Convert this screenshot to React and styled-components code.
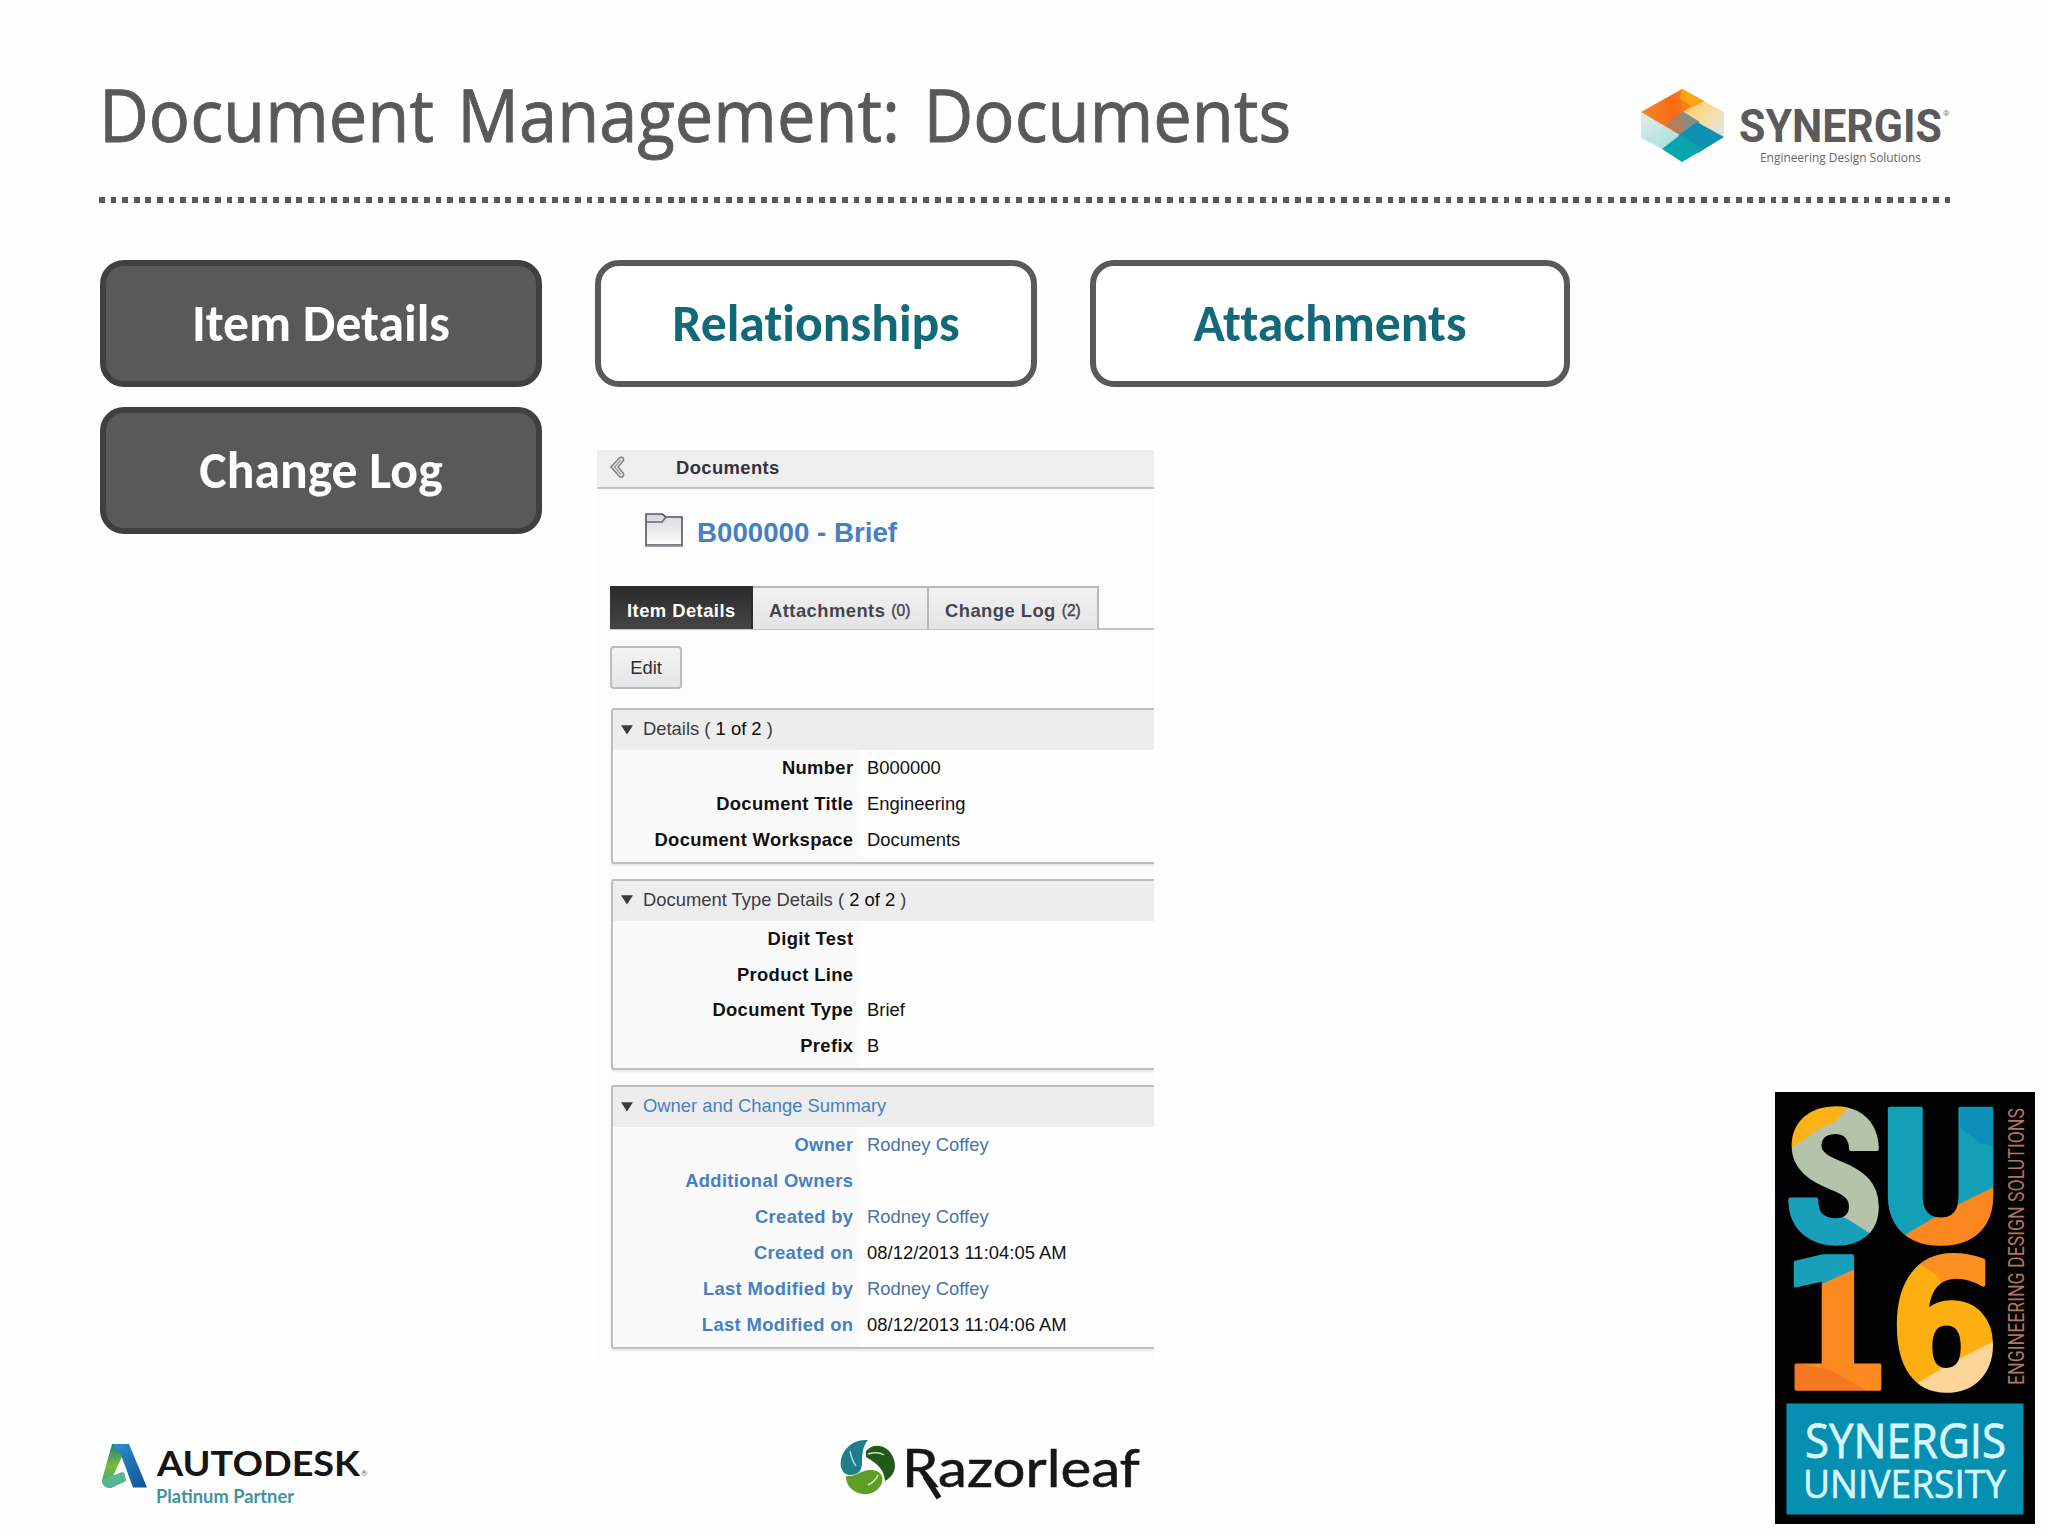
import React from 'react';
import styled, { createGlobalStyle, css } from 'styled-components';

const colors = {
  gray: '#595959',
  grayDark: '#404040',
  teal: '#126977',
  link: '#4580c2',
  value: '#4a73a8',
  line: '#bdbdbf',
  bar: '#eeedee',
};

const fonts = {
  title: "'Open Sans', 'Noto Sans', sans-serif",
  nav: "Carlito, Lato, sans-serif",
  panel: "'Liberation Sans', Arial, sans-serif",
};

const GlobalStyle = createGlobalStyle`
  * {
    box-sizing: border-box;
  }

  body {
    margin: 0;
    background: #fefefe;
  }

  svg {
    overflow: visible;
  }
`;

const Slide = styled.div`
  display: flex;
  flex-direction: column;
  width: 2048px;
  height: 1536px;
  overflow: hidden;
  background: #fefefe;
`;

const Header = styled.header`
  display: flex;
  flex-direction: column;
  padding: 0 98px;
`;

const TitleRow = styled.div`
  display: flex;
  justify-content: space-between;
  align-items: flex-start;
  height: 197px;
`;

const Title = styled.h1`
  margin: 64px 0 0 1px;
  font-family: ${fonts.title};
  font-size: 74px;
  font-weight: 400;
  line-height: 100px;
  word-spacing: 6px;
  color: ${colors.gray};
  -webkit-text-stroke: 0.9px ${colors.gray};
  white-space: nowrap;
  transform: scaleX(0.928);
  transform-origin: left center;
`;

const SynergisMark = styled.svg`
  width: 312px;
  height: 90px;
  margin-top: 84px;
`;

const DottedRule = styled.div`
  height: 6px;
  margin-left: 0.5px;
  width: 1851.6px;
  background: repeating-linear-gradient(
    90deg,
    ${colors.gray} 0,
    ${colors.gray} 5.8px,
    transparent 5.8px,
    transparent 11.609px
  );
`;

const Body = styled.div`
  display: flex;
  flex: 1;
  justify-content: space-between;
  padding: 57px 13px 12px 100px;
`;

const Main = styled.main`
  display: flex;
  flex-direction: column;
  justify-content: space-between;
`;

const Board = styled.div`
  display: grid;
  grid-template-columns: 442px 442px 480px;
  column-gap: 53px;
  row-gap: 20px;
  align-items: start;
`;

const NavButton = styled.button`
  display: flex;
  align-items: center;
  justify-content: center;
  height: 127px;
  padding: 1px 0 0;
  border: 6px solid ${colors.gray};
  border-radius: 24px;
  background: #fff;
  color: ${colors.teal};
  font-family: ${fonts.nav};
  font-size: 51.7px;
  font-weight: 700;
  font-variant-ligatures: none;
  line-height: 1;

  ${({ $filled }) =>
    $filled &&
    css`
      background: ${colors.gray};
      border-color: ${colors.grayDark};
      color: #fff;
    `}
`;

const Panel = styled.section`
  grid-column: 2 / 4;
  width: 557px;
  height: 911px;
  margin: 43px 0 0 2px;
  overflow: hidden;
  background: #fcfcfd;
  font-family: ${fonts.panel};
  font-size: 18.4px;
  color: #111;
`;

const PanelBar = styled.div`
  display: flex;
  align-items: center;
  height: 39px;
  padding: 0 0 2px 12px;
  gap: 50px;
  background: #efeff0;
  border-bottom: 2px solid #c4c4c6;
  color: #33333b;
  font-weight: 700;
  letter-spacing: 0.4px;
`;

const BackIcon = styled.svg`
  width: 17px;
  height: 24px;
  margin-top: -2px;
`;

const ItemHeading = styled.div`
  display: flex;
  height: 97px;
  padding: 23px 0 0 47px;
  gap: 13px;
`;

const FolderIcon = styled.svg`
  width: 40px;
  height: 35px;
`;

const ItemName = styled.h2`
  margin: 5px 0 0;
  font-size: 27.7px;
  line-height: 32px;
  color: ${colors.link};
`;

const TabStrip = styled.div`
  display: flex;
  height: 44px;
  margin-left: 13px;
  border-bottom: 2px solid #c4c4c8;
`;

const Tab = styled.div`
  display: flex;
  align-items: center;
  gap: 6px;
  width: ${({ $width }) => $width}px;
  height: 43px;
  padding: 5px 0 0 16px;
  border: solid #b9b9bb;
  border-width: 2px 2px 0 0;
  background: linear-gradient(#f1f1f2, #e4e4e6);
  color: #45454d;
  font-weight: 700;
  letter-spacing: 0.45px;
  white-space: nowrap;

  ${({ $active }) =>
    $active &&
    css`
      padding-left: 17px;
      border-color: #2b2b2b;
      background: linear-gradient(#2c2c2c, #454545);
      color: #fff;
    `}
`;

const TabCount = styled.span`
  font-size: 15.6px;
  font-weight: 400;
  letter-spacing: 0;
  -webkit-text-stroke: 0.4px #45454d;
`;

const EditButton = styled.button`
  display: block;
  width: 72px;
  height: 43px;
  margin: 16px 0 19px 13px;
  padding: 0;
  border: 2px solid #bcbcbe;
  border-radius: 4px;
  background: linear-gradient(#f3f3f4, #e6e6e8);
  font: inherit;
  color: #2c2c33;
`;

const Section = styled.div`
  margin: 0 0 15px 14px;
  padding-bottom: 4.2px;
  border: solid ${colors.line};
  border-width: 2px 0 2px 2px;
  border-radius: 3px 0 0 3px;
  box-shadow: 0 2px 2px rgba(0, 0, 0, 0.08);
  background: linear-gradient(90deg, #fbfafb 247px, #fefefe 247px);
`;

const SectionHeader = styled.div`
  display: flex;
  align-items: center;
  height: 40px;
  padding: 0 0 2px 8px;
  gap: 10px;
  background: ${colors.bar};
  color: ${({ $blue }) => ($blue ? colors.link : '#3c3c42')};
  white-space: pre;

  b {
    font-weight: 400;
    color: #0b0b0b;
  }
`;

const Triangle = styled.svg`
  width: 12px;
  height: 11px;
`;

const Field = styled.div`
  display: grid;
  grid-template-columns: 247px 1fr;
  height: 35.85px;
  line-height: 36px;
`;

const Label = styled.span`
  padding-right: 6.6px;
  text-align: right;
  font-weight: 700;
  letter-spacing: 0.34px;
  color: ${({ $blue }) => ($blue ? colors.link : '#111')};
`;

const Value = styled.span`
  padding-left: 7px;
  letter-spacing: 0.03px;
  color: ${({ $blue }) => ($blue ? colors.value : '#111')};
`;

const Footer = styled.footer`
  display: flex;
  gap: 458px;
  height: 85px;
`;

const AutodeskMark = styled.svg`
  width: 280px;
  height: 80px;
`;

const RazorleafMark = styled.svg`
  width: 320px;
  height: 80px;
`;

const BadgeMark = styled.svg`
  align-self: flex-end;
  width: 260px;
  height: 432px;
`;

const sections = [
  {
    title: (
      <span>
        Details ( <b>1 of 2</b> )
      </span>
    ),
    rows: [
      ['Number', 'B000000'],
      ['Document Title', 'Engineering'],
      ['Document Workspace', 'Documents'],
    ],
  },
  {
    title: (
      <span>
        Document Type Details ( <b>2 of 2</b> )
      </span>
    ),
    rows: [
      ['Digit Test', ''],
      ['Product Line', ''],
      ['Document Type', 'Brief'],
      ['Prefix', 'B'],
    ],
  },
  {
    title: <span>Owner and Change Summary</span>,
    blue: true,
    rows: [
      ['Owner', 'Rodney Coffey'],
      ['Additional Owners', ''],
      ['Created by', 'Rodney Coffey'],
      ['Created on', '08/12/2013 11:04:05 AM'],
      ['Last Modified by', 'Rodney Coffey'],
      ['Last Modified on', '08/12/2013 11:04:06 AM'],
    ],
  },
];

function SynergisLogo() {
  return (
    <SynergisMark viewBox="0 0 312 90">
      <defs>
        <linearGradient id="synOrange" x1="0" y1="0.5" x2="1" y2="0.3">
          <stop offset="0" stopColor="#f9842a" />
          <stop offset="0.5" stopColor="#f66a17" />
          <stop offset="1" stopColor="#fb9d14" />
        </linearGradient>
        <linearGradient id="synCream" x1="0" y1="0" x2="1" y2="0.6">
          <stop offset="0" stopColor="#fdc766" />
          <stop offset="0.6" stopColor="#fbdc9c" />
          <stop offset="1" stopColor="#e3e3d4" />
        </linearGradient>
        <linearGradient id="synPale" x1="0" y1="0" x2="0.7" y2="1">
          <stop offset="0" stopColor="#e6ebe6" />
          <stop offset="1" stopColor="#a5e2df" />
        </linearGradient>
      </defs>
      <polygon points="3,28 44,49 26,66 3,54" fill="url(#synPale)" />
      <polygon points="44,27 64,16 86,28 86,53 58,38" fill="url(#synCream)" />
      <polygon points="44,5 3,28 42,51 44,28 66,17" fill="url(#synOrange)" />
      <polygon points="44,5 66,17 54,23 42,14" fill="#fca512" />
      <polygon points="28,40 44,27 60,39 42,51" fill="#b07f63" />
      <polygon points="44,27 62,38 46,50" fill="#7f8f84" />
      <polygon points="40,52 59,38 86,53 60,69" fill="#0e90b0" />
      <polygon points="24,65 42,51 66,65 44,78" fill="#08a5ae" />
      <text
        x="101"
        y="58"
        fontFamily="Roboto, sans-serif"
        fontWeight="700"
        fontSize="45.5"
        fill="#5c5a5b"
        textLength="203"
        lengthAdjust="spacingAndGlyphs"
      >
        SYNERGIS
      </text>
      <text x="305" y="32" fontFamily="Roboto, sans-serif" fontSize="8" fill="#777">
        ®
      </text>
      <text
        x="122"
        y="78"
        fontFamily="'Open Sans', sans-serif"
        fontSize="13"
        fill="#666"
        textLength="161"
        lengthAdjust="spacingAndGlyphs"
      >
        Engineering Design Solutions
      </text>
    </SynergisMark>
  );
}

function AutodeskLogo() {
  return (
    <AutodeskMark viewBox="0 0 280 80">
      <defs>
        <linearGradient id="adskLeft" x1="0" y1="0" x2="0" y2="1">
          <stop offset="0" stopColor="#1a7f86" />
          <stop offset="0.5" stopColor="#7cbb3a" />
          <stop offset="1" stopColor="#2f9d7c" />
        </linearGradient>
        <linearGradient id="adskRight" x1="0" y1="0" x2="1" y2="1">
          <stop offset="0" stopColor="#2a93c8" />
          <stop offset="1" stopColor="#164f9c" />
        </linearGradient>
      </defs>
      <path d="M12 5 L28 5 L13 37 L22 33 L26 42 L11 49 Q2 49 2 41 Z" fill="url(#adskLeft)" />
      <path d="M2 40 L24 33 L26 41 L11 49 Q2 49 2 40 Z" fill="#56b893" />
      <path d="M13 5 L29 5 L47 48.500 L33 48.500 L21 16 Z" fill="url(#adskRight)" />
      <text
        x="57"
        y="37"
        fontFamily="Lato, sans-serif"
        fontWeight="700"
        fontSize="34.5"
        fill="#151515"
        textLength="203"
        lengthAdjust="spacingAndGlyphs"
      >
        AUTODESK
      </text>
      <text x="261" y="37" fontFamily="Lato, sans-serif" fontSize="8" fill="#666">
        ®
      </text>
      <text
        x="56"
        y="64"
        fontFamily="Lato, sans-serif"
        fontWeight="700"
        fontSize="18"
        fill="#43939a"
        textLength="138"
        lengthAdjust="spacingAndGlyphs"
      >
        Platinum Partner
      </text>
    </AutodeskMark>
  );
}

function RazorleafLogo() {
  return (
    <RazorleafMark viewBox="0 0 320 80">
      <path d="M30 1 C12 0 1 14 3 28 C5 34 8 36 12 36 C20 36 24 32 24 24 C24 14 25 7 30 1 Z" fill="#1f7e8c" />
      <path d="M28 12 C36 3 50 6 55 18 C60 29 55 38 47 42 C46 32 42 26 28 18 Z" fill="#23581d" />
      <path d="M8 37 C18 38 24 30 34 31 C42 32 46 36 44 44 C40 54 28 58 18 53 C12 50 8 45 8 37 Z" fill="#5d9e26" />
      <path d="M12 12 Q14 22 18 27" fill="none" stroke="#a9dce0" strokeWidth="1.4" />
      <path d="M30 15 Q40 12 46 16" fill="none" stroke="#cfe5b5" strokeWidth="1.4" />
      <path d="M30 46 Q38 42 40 36" fill="none" stroke="#d7efb0" strokeWidth="1.4" />
      <text
        x="64"
        y="48"
        fontFamily="Lato, sans-serif"
        fontSize="52"
        fill="#161616"
        stroke="#161616"
        strokeWidth="0.6"
        textLength="238"
        lengthAdjust="spacingAndGlyphs"
      >
        Razorleaf
      </text>
      <line x1="87" y1="37" x2="101" y2="59" stroke="#161616" strokeWidth="5.500" />
    </RazorleafMark>
  );
}

// ink: [left, right, ascent, descent] of the glyph at 100px, outline included
function PaintedGlyph({ id, char, font, weight, ink, box, base, patches }) {
  const [left, right, ascent, descent] = ink;
  const [x, y, width, height] = box;
  const sx = width / (right - left);
  const sy = height / (ascent + descent);
  const tx = x - left * sx;
  const ty = y + ascent * sy;

  return (
    <>
      <pattern
        id={id}
        patternUnits="userSpaceOnUse"
        width="260"
        height="432"
        patternTransform={`scale(${1 / sx} ${1 / sy}) translate(${-tx} ${-ty})`}
      >
        <rect width="260" height="432" fill={base} />
        {patches.map(([fill, points]) => (
          <polygon key={points} points={points} fill={fill} />
        ))}
      </pattern>
      <text
        transform={`translate(${tx} ${ty}) scale(${sx} ${sy})`}
        fontFamily={font}
        fontWeight={weight}
        fontSize="100"
        fill={`url(#${id})`}
        stroke={`url(#${id})`}
        strokeWidth="2"
        strokeLinejoin="round"
      >
        {char}
      </text>
    </>
  );
}

const glyphs = [
  {
    id: 'glyphS',
    char: 'S',
    font: 'Roboto, sans-serif',
    weight: 900,
    ink: [1.5, 61, 73, 2],
    box: [12.3, 14.7, 92.7, 139],
    base: '#b5c3ab',
    patches: [
      ['#fdb316', '0,0 76,0 72,16 60,30 45,36 15,57 0,62'],
      ['#189fb9', '0,100 52,100 62,122 74,128 96,142 96,160 0,160'],
    ],
  },
  {
    id: 'glyphU',
    char: 'U',
    font: 'Roboto, sans-serif',
    weight: 900,
    ink: [3.5, 63, 72.500, 2],
    box: [111.7, 14.7, 108.3, 139],
    base: '#139fb8',
    patches: [
      ['#0b8fb9', '185,0 225,0 225,55 205,51 185,36'],
      ['#fb8720', '125,146 155,128 188,110 225,92 225,160 125,160'],
    ],
  },
  {
    id: 'glyph1',
    char: '1',
    font: "'DejaVu Sans', sans-serif",
    weight: 700,
    ink: [10.500, 64.500, 74, 1],
    box: [19.3, 162.3, 88.4, 136.7],
    base: '#fb8a20',
    patches: [
      ['#189fb9', '0,216 47,192 82,176 82,155 0,155'],
      ['#f4781f', '0,266 55,278 98,302 0,302'],
    ],
  },
  {
    id: 'glyph6',
    char: '6',
    font: "'DejaVu Sans', sans-serif",
    weight: 700,
    ink: [4, 66, 75.500, 2],
    box: [120, 160.7, 99.3, 139],
    base: '#fdaf12',
    patches: [
      ['#fb8f20', '136,155 142,170 160,182 168,192 225,192 225,155'],
      ['#fdd598', '135,296 167,276 192,263 225,246 225,305 135,305'],
    ],
  },
];

function UniversityBadge() {
  return (
    <BadgeMark viewBox="0 0 260 432">
      <rect width="260" height="432" fill="#020202" />
      {glyphs.map((glyph) => (
        <PaintedGlyph key={glyph.id} {...glyph} />
      ))}
      <text
        transform="translate(249 293) rotate(-90)"
        fontFamily="Roboto, sans-serif"
        fontSize="21.5"
        fill="#b0765c"
        textLength="277"
        lengthAdjust="spacingAndGlyphs"
      >
        ENGINEERING DESIGN SOLUTIONS
      </text>
      <rect x="11.500" y="311.500" width="237" height="111" fill="#0590b2" />
      <text
        x="30"
        y="366"
        fontFamily="'Open Sans', sans-serif"
        fontSize="47.500"
        fill="#d8f5fb"
        stroke="#d8f5fb"
        strokeWidth="0.8"
        textLength="201"
        lengthAdjust="spacingAndGlyphs"
      >
        SYNERGIS
      </text>
      <text
        x="28"
        y="406"
        fontFamily="'Open Sans', sans-serif"
        fontSize="39"
        fill="#d8f5fb"
        stroke="#d8f5fb"
        strokeWidth="0.6"
        textLength="203"
        lengthAdjust="spacingAndGlyphs"
      >
        UNIVERSITY
      </text>
    </BadgeMark>
  );
}

function DocumentPanel() {
  return (
    <Panel>
      <PanelBar>
        <BackIcon viewBox="0 0 17 24">
          <path
            d="M11 2.500 L2 12 L11 22 Q15 22.500 14.500 18.500 L9 12 L14.500 5.500 Q15 1.500 11 2.500 Z"
            fill="#f4f4f4"
            stroke="#858585"
            strokeWidth="1.700"
          />
          <path d="M12 5 L5.500 12 L12 19.500" fill="none" stroke="#9a9a9a" strokeWidth="1.400" />
        </BackIcon>
        Documents
      </PanelBar>
      <ItemHeading>
        <FolderIcon viewBox="0 0 40 35">
          <defs>
            <linearGradient id="folderFill" x1="0" y1="0" x2="0" y2="1">
              <stop offset="0" stopColor="#d6d6dc" />
              <stop offset="1" stopColor="#fdfdfd" />
            </linearGradient>
          </defs>
          <path d="M2 33 V2 H18 L22 5 H38 V33 Z" fill="url(#folderFill)" stroke="#55555d" strokeWidth="1.600" />
          <path d="M2 10 H18 L22 5" fill="none" stroke="#66666e" strokeWidth="1.500" />
          <path d="M1 34 H39" stroke="#8a8a90" strokeWidth="1.500" />
        </FolderIcon>
        <ItemName>B000000 - Brief</ItemName>
      </ItemHeading>
      <TabStrip>
        <Tab $active $width={143}>
          Item Details
        </Tab>
        <Tab $width={176}>
          Attachments <TabCount>(0)</TabCount>
        </Tab>
        <Tab $width={170}>
          Change Log <TabCount>(2)</TabCount>
        </Tab>
      </TabStrip>
      <EditButton type="button">Edit</EditButton>
      {sections.map(({ title, blue, rows }, index) => (
        <Section key={index}>
          <SectionHeader $blue={blue}>
            <Triangle viewBox="0 0 13 11">
              <polygon points="0,1 13,1 6.500,11" fill="#3b3b3b" />
            </Triangle>
            {title}
          </SectionHeader>
          {rows.map(([label, value]) => (
            <Field key={label}>
              <Label $blue={blue}>{label}</Label>
              <Value $blue={value === 'Rodney Coffey'}>{value}</Value>
            </Field>
          ))}
        </Section>
      ))}
    </Panel>
  );
}

export default function App() {
  return (
    <>
      <GlobalStyle />
      <Slide>
        <Header>
          <TitleRow>
            <Title>Document Management: Documents</Title>
            <SynergisLogo />
          </TitleRow>
          <DottedRule />
        </Header>
        <Body>
          <Main>
            <Board>
              <NavButton $filled>Item Details</NavButton>
              <NavButton>Relationships</NavButton>
              <NavButton>Attachments</NavButton>
              <NavButton $filled>Change Log</NavButton>
              <DocumentPanel />
            </Board>
            <Footer>
              <AutodeskLogo />
              <RazorleafLogo />
            </Footer>
          </Main>
          <UniversityBadge />
        </Body>
      </Slide>
    </>
  );
}
